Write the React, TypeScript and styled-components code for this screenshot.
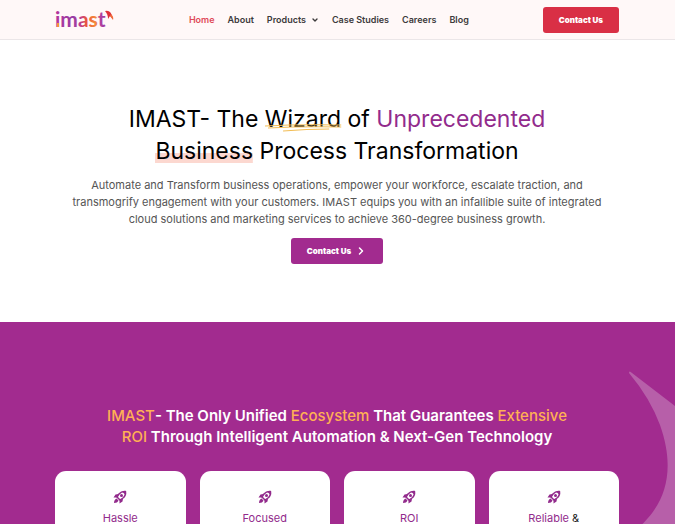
import React from "react";
import styled, { createGlobalStyle } from "styled-components";
import { ChevronDown, ChevronRight } from "lucide-react";

const GlobalStyle = createGlobalStyle`
  *, *::before, *::after { box-sizing: border-box; }
  body {
    margin: 0;
    background: #fff;
    color: #000;
    font-family: Inter, "Liberation Sans", sans-serif;
  }
  h1, h2, h3, p, ul { margin: 0; padding: 0; }
`;

const Header = styled.header`
  background: #fff8f8;
  border-bottom: 1px solid #ebe6e8;
  padding: 0 56px 0 55px;
  height: 40px;
  display: flex;
  align-items: center;
  justify-content: space-between;
`;

const LogoLink = styled.a`
  display: block;
  line-height: 0;
`;

const Menu = styled.ul`
  display: flex;
  gap: 13px;
  list-style: none;
`;

const MenuLink = styled.a<{ $active?: boolean }>`
  display: flex;
  align-items: center;
  gap: 5px;
  font-size: 9px;
  line-height: 12px;
  font-weight: 600;
  text-decoration: none;
  white-space: nowrap;
  color: ${(p) => (p.$active ? "#e04a58" : "#3c3a3b")};
`;

const Button = styled.button<{ $tone: "red" | "purple" }>`
  display: inline-flex;
  align-items: center;
  justify-content: center;
  gap: 4px;
  height: 26px;
  padding: 0 16px;
  border: 0;
  border-radius: 3px;
  background: ${(p) => (p.$tone === "red" ? "#d92f45" : "#a22b8f")};
  color: #fff;
  font-family: inherit;
  font-size: 8px;
  font-weight: 900;
  white-space: nowrap;
  cursor: pointer;
`;

const Hero = styled.section`
  padding: 63px 56px 58px 55px;
  display: flex;
  flex-direction: column;
  align-items: center;
  text-align: center;
`;

const Title = styled.h1`
  max-width: 440px;
  font-size: 23px;
  line-height: 32px;
  font-weight: 400;
`;

const Scribbled = styled.span`
  position: relative;
  display: inline-block;
`;

const ScribbleArt = styled.svg`
  position: absolute;
  left: 0;
  bottom: 4px;
  width: 100%;
  height: 8px;
  overflow: visible;
`;

const Marked = styled.span`
  background: linear-gradient(#fcd8d0, #fcd8d0) center 88% / 100% 10px no-repeat;
`;

const Accent = styled.span<{ $color: string }>`
  color: ${(p) => p.$color};
`;

const Lead = styled.p`
  margin-top: 10px;
  max-width: 556px;
  font-size: 11px;
  line-height: 17px;
  color: #555;
`;

const HeroAction = styled.div`
  margin-top: 10px;
  display: flex;
`;

const Feature = styled.section`
  position: relative;
  overflow: hidden;
  background: #a22b8f;
  padding: 83px 56px 60px 55px;
`;

const Crescent = styled.svg`
  position: absolute;
  top: 49px;
  right: 0;
  width: 47px;
  height: 180px;
`;

const FeatureTitle = styled.h2`
  max-width: 480px;
  margin: 0 auto;
  text-align: center;
  color: #fff;
  font-size: 15px;
  line-height: 21px;
  font-weight: 600;
`;

const Highlight = styled.span`
  color: #ffb054;
  font-weight: 500;
`;

const Cards = styled.div`
  position: relative;
  margin-top: 24px;
  display: grid;
  grid-template-columns: repeat(4, 1fr);
  gap: 14px;
`;

const Card = styled.article`
  min-height: 100px;
  padding: 19px 14px;
  border-radius: 11px;
  background: #fff;
  display: flex;
  flex-direction: column;
  align-items: center;
  gap: 7px;
  color: #922b8c;
`;

const CardTitle = styled.h3`
  font-size: 11px;
  line-height: 14px;
  font-weight: 400;
`;

const Logo = () => (
  <svg width="60" height="22" viewBox="0 0 60 22" role="img" aria-label="imast">
    <defs>
      <linearGradient id="word" x1="0" y1="0" x2="52" y2="0" gradientUnits="userSpaceOnUse">
        <stop offset="0" stopColor="#b5359c" />
        <stop offset="0.35" stopColor="#963da5" />
        <stop offset="0.5" stopColor="#c0408c" />
        <stop offset="0.6" stopColor="#e8553c" />
        <stop offset="0.78" stopColor="#f58a3c" />
        <stop offset="0.86" stopColor="#b5409c" />
        <stop offset="1" stopColor="#963da5" />
      </linearGradient>
    </defs>
    <text x="0" y="18" fontFamily="Lato, sans-serif" fontSize="21" fontWeight="700" fill="url(#word)">
      imast
    </text>
    <path d="M2 14h2v4h-2z" fill="#f5953b" />
    <path d="M50 2q6-2 8 8l-3-3-2 3q0-5-3-8z" fill="#df3038" />
    <path d="M56 5q3 3 2 6l-3-4z" fill="#ef6b3b" />
  </svg>
);

const Rocket = () => (
  <svg width="14" height="14" viewBox="0 0 28 28" fill="none" aria-hidden="true">
    <path
      d="M25 3Q17 2 12 8L8 14L14 20L20 16Q26 11 25 3Z"
      stroke="currentColor"
      strokeWidth="3"
      strokeLinejoin="round"
    />
    <path d="M26 2L18 3L25 10Z" fill="currentColor" />
    <circle cx="17" cy="11" r="3" fill="currentColor" />
    <path d="M11 8L5 9L1 15L8 15ZM20 17L19 23L13 27L13 20Z" fill="currentColor" />
    <path d="M7 17L11 21Q9 26 2 26Q2 19 7 17Z" fill="currentColor" />
  </svg>
);

const features = ["Hassle", "Focused", "ROI", "Reliable"];

export default function App() {
  return (
    <>
      <GlobalStyle />
      <Header>
        <LogoLink href="#"><Logo /></LogoLink>
        <nav>
          <Menu>
            <li><MenuLink href="#" $active>Home</MenuLink></li>
            <li><MenuLink href="#about">About</MenuLink></li>
            <li><MenuLink href="#products">Products <ChevronDown size={8} strokeWidth={4} /></MenuLink></li>
            <li><MenuLink href="#cases">Case Studies</MenuLink></li>
            <li><MenuLink href="#careers">Careers</MenuLink></li>
            <li><MenuLink href="#blog">Blog</MenuLink></li>
          </Menu>
        </nav>
        <Button $tone="red">Contact Us</Button>
      </Header>
      <main>
        <Hero>
          <Title>
            IMAST- The{" "}
            <Scribbled>
              Wizard
              <ScribbleArt viewBox="0 0 76 8" preserveAspectRatio="none" aria-hidden="true">
                <path
                  d="M0 3Q36 1 76 2M3 5Q40 3 76 4M18 8Q42 6 64 6"
                  fill="none"
                  stroke="#f2bd55"
                  strokeWidth="1"
                />
              </ScribbleArt>
            </Scribbled>{" "}
            of <Accent $color="#922b8c">Unprecedented</Accent> <Marked>Business</Marked> Process Transformation
          </Title>
          <Lead>
            Automate and Transform business operations, empower your workforce, escalate traction, and
            transmogrify engagement with your customers. IMAST equips you with an infallible suite of
            integrated cloud solutions and marketing services to achieve 360-degree business growth.
          </Lead>
          <HeroAction>
            <Button $tone="purple">Contact Us <ChevronRight size={12} strokeWidth={3} /></Button>
          </HeroAction>
        </Hero>
        <Feature>
          <Crescent viewBox="0 0 47 180" aria-hidden="true">
            <path d="M1 2Q1-1 4 2L47 35V180H0V165C35 140 50 105 32 54Q22 27 1 2Z" fill="#b75fa9" />
          </Crescent>
          <FeatureTitle>
            <Highlight>IMAST</Highlight>- The Only Unified <Highlight>Ecosystem</Highlight> That Guarantees{" "}
            <Highlight>Extensive ROI</Highlight> Through Intelligent Automation &amp; Next-Gen Technology
          </FeatureTitle>
          <Cards>
            {features.map((name) => (
              <Card key={name}>
                <Rocket />
                <CardTitle>
                  {name}
                  {name === "Reliable" && <Accent $color="#111"> &amp;</Accent>}
                </CardTitle>
              </Card>
            ))}
          </Cards>
        </Feature>
      </main>
    </>
  );
}
